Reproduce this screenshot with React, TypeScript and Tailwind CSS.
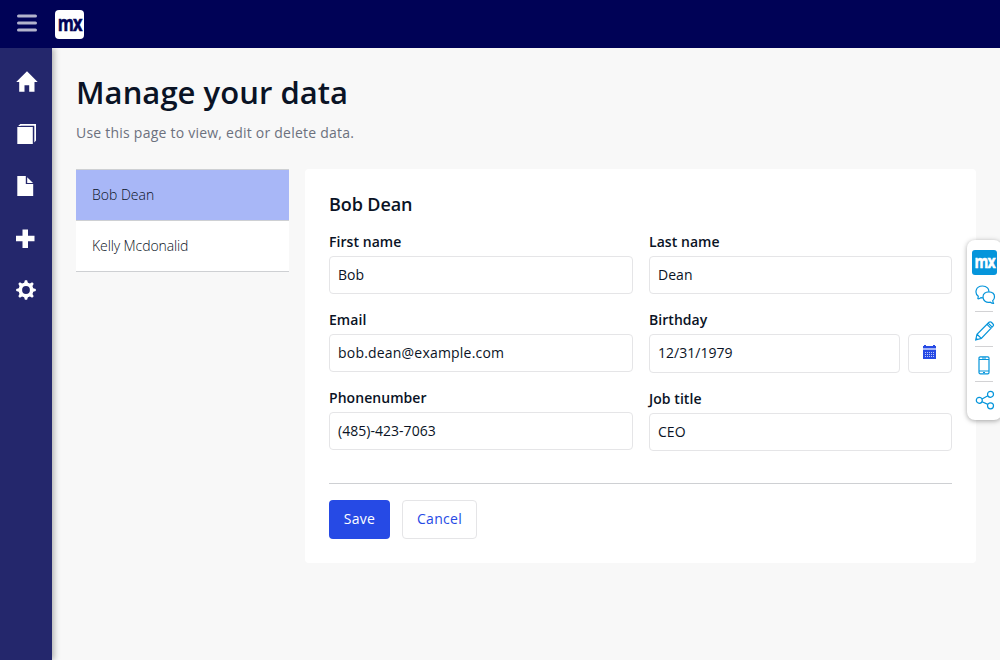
import type { ReactNode } from 'react';

function Field({ label, value, children }: { label: string; value: string; children?: ReactNode }) {
  return (
    <div className="mb-4">
      <div className="mb-1 h-5 text-[14px] font-semibold leading-5 tracking-[0.05px]">{label}</div>
      <div className="flex gap-2">
        <input
          aria-label={label}
          defaultValue={value}
          className={`${children ? 'h-[39px]' : 'h-[38px]'} ${value.includes('@') ? 'tracking-[0.2px]' : 'tracking-[0.03px]'} w-full min-w-0 flex-1 rounded border border-[#e5e5e7] bg-white px-2 pb-[2px] text-[14px] leading-5 outline-none`}
        />
        {children}
      </div>
    </div>
  );
}

function MxMark({ className, fill }: { className: string; fill: string }) {
  return (
    <svg viewBox="0 0 29 29" className={className} overflow="visible">
      <text
        x="2.8"
        y="20.8"
        textLength="24"
        lengthAdjust="spacingAndGlyphs"
        fill={fill}
        stroke={fill}
        strokeWidth="0.6"
        fontFamily="Open Sans, sans-serif"
        fontWeight="700"
        fontSize="21"
        letterSpacing="-1"
      >
        mx
      </text>
    </svg>
  );
}

function Sidebar() {
  const icons: ReactNode[] = [
    <path d="M10.8 0 L21.5 10.8 H18.3 V20.5 H13 V14 H8.3 V20.5 H3 V10.8 H0 Z" transform="translate(0.2 0.2)" />,
    <g>
      <path d="M1.3 4 H16.8 V21 H1.3 Z" />
      <path d="M2.2 3.1 L4.3 1 H20 V17.5 L18.3 19.5 V2.7 H4.8 L4.3 3.1 Z" />
    </g>,
    <g>
      <path d="M1.3 1 H9.8 V9 H17.2 V21 H1.3 Z" />
      <path d="M11.2 2.3 L17 8 H11.2 Z" />
    </g>,
    <path d="M6.5 2.5 H12 V8.7 H18.5 V14.2 H12 V20.9 H6.5 V14.2 H0 V8.7 H6.5 Z" />,
    <g>
      <circle cx="10" cy="11" r="5.7" fill="none" stroke="white" strokeWidth="3.6" />
      {[0, 45, 90, 135, 180, 225, 270, 315].map((angle) => (
        <path key={angle} d="M7.9 4.6 L8.9 1.2 H11.1 L12.1 4.6 Z" transform={`rotate(${angle} 10 11)`} />
      ))}
    </g>,
  ];
  return (
    <nav className="relative z-10 w-[52px] shrink-0 bg-[#24276c] pt-2 shadow-[2px_0_6px_rgba(0,0,0,0.3)]">
      {icons.map((icon, i) => (
        <a key={i} className="flex h-13 items-center pl-4">
          <svg width="22" height="22" viewBox="0 0 22 22" fill="white">
            {icon}
          </svg>
        </a>
      ))}
    </nav>
  );
}

function CalendarIcon() {
  return (
    <svg width="14" height="14" viewBox="0 0 14 14" shapeRendering="crispEdges" className="mb-[3px]">
      <path fill="#264ae5" d="M1 0 H3 V1 H10 V0 H12 V1 H13 V3 H0 V1 H1 Z M0 5 H13 V14 H0 Z" />
      <path fill="#a8b7f7" d="M0 3 H13 V5 H0 Z" />
      <path stroke="#bac6f8" strokeWidth="1" strokeDasharray="1 1" d="M2 7.5 H12 M2 9.5 H12 M2 11.5 H12" />
    </svg>
  );
}

function FloatingTools() {
  return (
    <aside className="absolute right-[-2px] top-[240px] z-20 flex h-[180px] w-[35px] flex-col items-start rounded-lg bg-white pl-[5px] pt-[10px] shadow-[0_1px_5px_rgba(0,0,0,0.35)]">
      <div className="h-[25px] w-[25px] rounded-[3px] bg-[#0595db]">
        <MxMark className="h-[25px] w-[25px]" fill="white" />
      </div>
      <div className="flex h-9 w-[25px] flex-col border-0 pl-[3px] pt-[10px]">
        <svg width="21" height="20" viewBox="0 0 21 20" fill="none" stroke="#0595db" strokeWidth="1.2">
          <path d="M2.8 14 L3.3 11.3 C-.5 8.5 .2 1 7.5 1 C12 1 14.2 4 13.7 6.6 M2.8 14 C4 14 5 13.2 6 12.6 L8 12.8" />
          <path d="M13.8 6.8 C17.5 6.8 19.7 9 19.5 12 C19.4 13.8 18.7 15 17.7 15.8 L18.5 18.5 C17.2 18.5 16 17.8 15.3 17.2 C11 18.2 8 15.4 8 12 C8 9 10.4 6.8 13.8 6.8 Z" />
        </svg>
      </div>
      <div className="ml-[3px] flex h-[35px] w-[18px] border-t border-[#d2d2d4] pt-[9px]">
        <svg width="20" height="20" viewBox="0 0 20 20" fill="none" stroke="#0595db" strokeWidth="1.2" className="shrink-0">
          <path d="M.7 19 L2 13.2 L14 1.3 Q15.2 .3 16.4 1.3 L18 3 Q19 4.1 18 5.2 L6.3 17.4 Z M12 3.3 L16 7.3 M13.2 2.1 L17.2 6.1 M2 13.2 L6.3 17.4 M1.2 17.3 L2.4 18.5" />
        </svg>
      </div>
      <div className="ml-[3px] flex h-[35px] w-[18px] border-t border-[#d2d2d4] pl-[2.5px] pt-[8.5px]">
        <svg width="12" height="19" viewBox="0 0 12 19" fill="none" stroke="#0595db" strokeWidth="1.2">
          <rect x="1" y="0.8" width="10" height="17" rx="1.3" />
          <path d="M1 3.5 H11 M1 15 H11 M4 2 H8 M5 16.5 H7" />
        </svg>
      </div>
      <div className="ml-[3px] flex w-[18px] border-t border-[#d2d2d4] pt-[8px]">
        <svg width="20" height="20" viewBox="0 0 20 20" fill="none" stroke="#0595db" strokeWidth="1.2" className="shrink-0">
          <circle cx="4.3" cy="10.3" r="3" />
          <circle cx="15.5" cy="4.3" r="3" />
          <circle cx="15.5" cy="15.8" r="3" />
          <path d="M7 9 L12.9 5.8 M7 11.7 L12.9 14.4" />
        </svg>
      </div>
    </aside>
  );
}

export default function App() {
  return (
    <div className="relative flex h-[660px] w-[1000px] flex-col overflow-hidden bg-[#f8f8f8] font-['Open_Sans',sans-serif] text-[#0a1325]">
      <header className="z-20 flex h-12 shrink-0 items-center bg-[#000256] pl-[17px]">
        <svg width="20" height="20" viewBox="0 0 20 20" stroke="#b2b3cc" strokeWidth="3" strokeLinecap="round">
          <path d="M1.5 2 H18.5 M1.5 9 H18.5 M1.5 16 H18.5" />
        </svg>
        <div className="ml-[18px] h-[29px] w-[29px] rounded bg-white">
          <MxMark className="h-[29px] w-[29px]" fill="#000256" />
        </div>
      </header>
      <div className="flex min-h-0 flex-1">
        <Sidebar />
        <main className="flex-1 px-6 pt-[23px]">
          <h1 className="text-[31px] font-semibold leading-[42px] tracking-[0.04px]">Manage your data</h1>
          <p className="mt-[10px] text-[14px] leading-5 tracking-[0.23px] text-[#6c717e]">Use this page to view, edit or delete data.</p>
          <div className="mt-[26px] flex items-start gap-4">
            <ul className="w-[213px] border-t border-[#ced0d3] text-[14px] font-light leading-5">
              <li className="h-[51px] border-b border-[#ced0d3] bg-[#a8b7f7] px-4 pt-[15px]">Bob Dean</li>
              <li className="h-[51px] border-b border-[#ced0d3] bg-white px-4 pt-[15px] tracking-[-0.1px]">Kelly Mcdonalid</li>
            </ul>
            <section className="h-[394px] flex-1 rounded bg-white px-6 pt-[23px]">
              <h2 className="mb-4 text-[18px] font-semibold leading-6 tracking-[-0.1px]">Bob Dean</h2>
              <div className="grid h-[252px] grid-cols-[304px_303px] items-start gap-4 border-b border-[#ced0d3]">
                <div>
                  <Field label="First name" value="Bob" />
                  <Field label="Email" value="bob.dean@example.com" />
                  <Field label="Phonenumber" value="(485)-423-7063" />
                </div>
                <div>
                  <Field label="Last name" value="Dean" />
                  <Field label="Birthday" value="12/31/1979">
                    <button aria-label="Open calendar" className="flex h-[39px] w-11 items-center justify-center rounded border border-[#e5e5e7]">
                      <CalendarIcon />
                    </button>
                  </Field>
                  <Field label="Job title" value="CEO" />
                </div>
              </div>
              <div className="mt-4 flex gap-3 text-[14px] leading-5 tracking-[0.3px]">
                <button className="h-[39px] w-[61px] rounded bg-[#264ae5] pb-[2px] text-white">Save</button>
                <button className="h-[39px] w-[75px] rounded border border-[#e5e5e7] pb-[2px] text-[#264ae5]">Cancel</button>
              </div>
            </section>
          </div>
        </main>
      </div>
      <FloatingTools />
    </div>
  );
}
